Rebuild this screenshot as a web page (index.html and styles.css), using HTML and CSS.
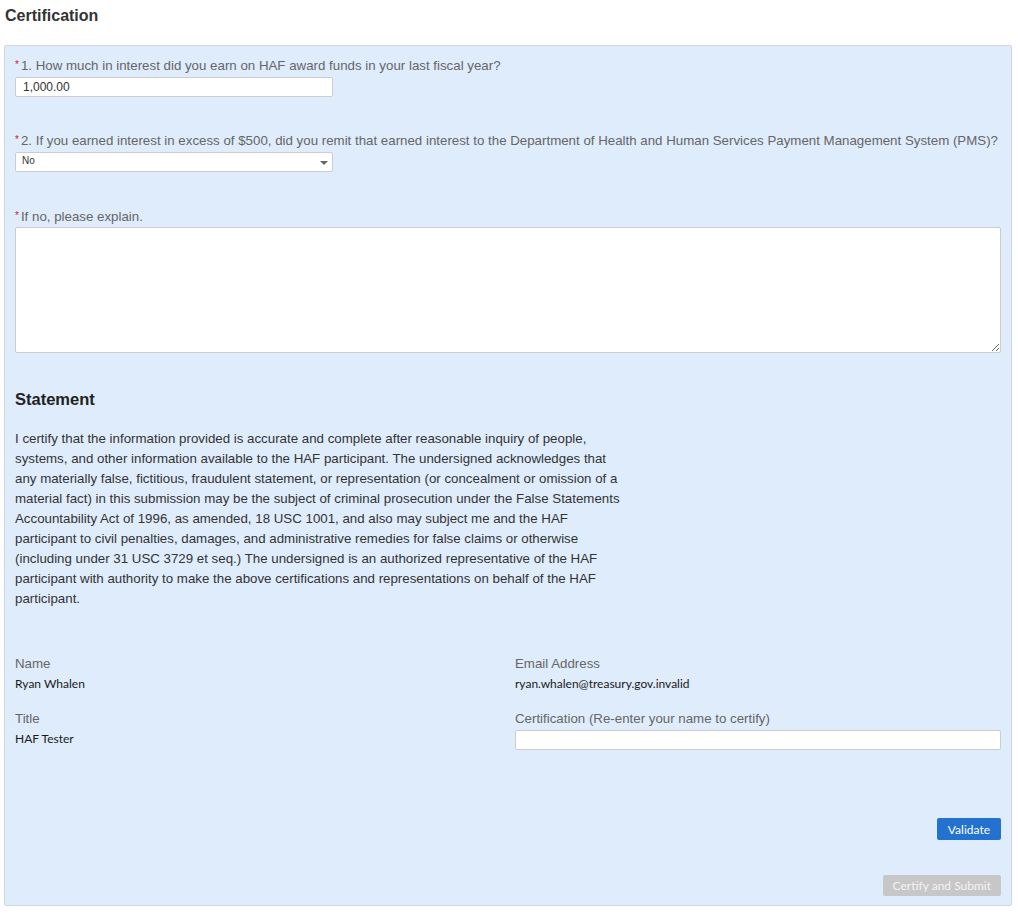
FILE: index.html
```html
<!DOCTYPE html>
<html>
<head>
<meta charset="utf-8">
<link rel="stylesheet" href="styles.css">
</head>
<body>
<h1 class="page-title">Certification</h1>
<div class="panel">
  <div class="field">
    <label class="label"><span class="req">*</span>1. How much in interest did you earn on HAF award funds in your last fiscal year?</label>
    <input class="input short" type="text" value="1,000.00">
  </div>
  <div class="field gap2">
    <label class="label"><span class="req">*</span>2. If you earned interest in excess of $500, did you remit that earned interest to the Department of Health and Human Services Payment Management System (PMS)?</label>
    <div class="select-wrap">
      <select class="select"><option>No</option></select>
    </div>
  </div>
  <div class="field gap3">
    <label class="label lbl3"><span class="req">*</span>If no, please explain.</label>
    <textarea class="textarea"></textarea>
  </div>
  <h2 class="section-title">Statement</h2>
  <p class="statement">I certify that the information provided is accurate and complete after reasonable inquiry of people, systems, and other information available to the HAF participant. The undersigned acknowledges that any materially false, fictitious, fraudulent statement, or representation (or concealment or omission of a material fact) in this submission may be the subject of criminal prosecution under the False Statements Accountability Act of 1996, as amended, 18 USC 1001, and also may subject me and the HAF participant to civil penalties, damages, and administrative remedies for false claims or otherwise (including under 31 USC 3729 et seq.) The undersigned is an authorized representative of the HAF participant with authority to make the above certifications and representations on behalf of the HAF participant.</p>
  <div class="info-grid">
    <div class="info">
      <div class="label">Name</div>
      <div class="value">Ryan Whalen</div>
    </div>
    <div class="info">
      <div class="label">Email Address</div>
      <div class="value">ryan.whalen@treasury.gov.invalid</div>
    </div>
    <div class="info row2">
      <div class="label">Title</div>
      <div class="value">HAF Tester</div>
    </div>
    <div class="info row2">
      <div class="label lbl-cert">Certification (Re-enter your name to certify)</div>
      <input class="input full" type="text">
    </div>
  </div>
  <div class="actions">
    <button class="btn btn-primary">Validate</button>
    <button class="btn btn-disabled">Certify and Submit</button>
  </div>
</div>
</body>
</html>
```

FILE: styles.css
```css
html, body {
  margin: 0;
  padding: 0;
  background: #ffffff;
}
body {
  padding: 0 6px 0 4px;
  font-family: "Liberation Sans", Arial, sans-serif;
  color: #333;
}
.page-title {
  margin: 0;
  padding: 6px 0 0 1px;
  height: 45px;
  box-sizing: border-box;
  font-size: 16px;
  line-height: 19px;
  font-weight: bold;
  color: #333;
}
.panel {
  background: #dfecfc;
  border: 1px solid #cfd6de;
  border-radius: 2px;
  padding: 12px 10px 9px 10px;
  box-sizing: border-box;
  width: 1008px;
}
.field {
  display: flex;
  flex-direction: column;
  align-items: flex-start;
}
.field.gap2 {
  margin-top: 36px;
}
.field.gap3 {
  margin-top: 37px;
}
.label {
  display: block;
  font-size: 13.3px;
  line-height: 16px;
  color: #666;
  margin-bottom: 3px;
  white-space: nowrap;
}
.lbl3 {
  margin-bottom: 2px;
}
.req {
  color: #d0202a;
  font-size: 10px;
  vertical-align: top;
  line-height: 13px;
  margin-right: 2px;
}
.input {
  display: block;
  box-sizing: border-box;
  height: 20px;
  border: 1px solid #cdcdcd;
  border-radius: 2px;
  background: #fff;
  font-family: "Liberation Sans", Arial, sans-serif;
  font-size: 12px;
  color: #333;
  padding: 0 7px;
  margin: 0;
  outline: none;
}
.input.short {
  width: 318px;
}
.input.full {
  width: 486px;
}
.select-wrap {
  position: relative;
  width: 318px;
  height: 20px;
}
.select-wrap::after {
  content: "";
  position: absolute;
  right: 5px;
  top: 9px;
  border-left: 4px solid transparent;
  border-right: 4px solid transparent;
  border-top: 4px solid #666;
  pointer-events: none;
}
.select {
  display: block;
  appearance: none;
  -webkit-appearance: none;
  box-sizing: border-box;
  width: 318px;
  height: 20px;
  border: 1px solid #cdcdcd;
  border-radius: 2px;
  background: #fff;
  font-family: "Liberation Sans", Arial, sans-serif;
  font-size: 10px;
  color: #333;
  padding: 0 6px 3px 6px;
  margin: 0;
  outline: none;
}
.textarea {
  box-sizing: border-box;
  width: 986px;
  height: 126px;
  border: 1px solid #cdcdcd;
  border-radius: 2px;
  background: #fff;
  margin: 0;
  display: block;
  outline: none;
}
.section-title {
  margin: 36px 0 0 0;
  font-size: 16.5px;
  line-height: 20px;
  font-weight: bold;
  color: #222;
}
.statement {
  margin: 20px 0 0 0;
  width: 610px;
  font-size: 13.3px;
  line-height: 20px;
  color: #333;
}
.info-grid {
  margin-top: 47px;
  display: grid;
  grid-template-columns: 500px 486px;
}
.info .label {
  margin-bottom: 4px;
}
.info.row2 {
  margin-top: 19px;
}
.info .lbl-cert {
  margin-bottom: 3px;
}
.value {
  font-family: Lato, "Liberation Sans", sans-serif;
  font-size: 12px;
  line-height: 16px;
  color: #1a1a1a;
}
.actions {
  margin-top: 68px;
  display: flex;
  flex-direction: column;
  align-items: flex-end;
  gap: 35px;
}
.btn {
  font-family: Lato, "Liberation Sans", sans-serif;
  font-size: 12px;
  border: none;
  border-radius: 2px;
  height: 21px;
  padding: 0 11px;
  margin: 0;
  line-height: 21px;
}
.btn-primary {
  background: #2472d0;
  color: #fff;
  height: 22px;
}
.btn-disabled {
  background: #c7c7c7;
  color: #f3f3f3;
  padding: 0 10px;
}
```
